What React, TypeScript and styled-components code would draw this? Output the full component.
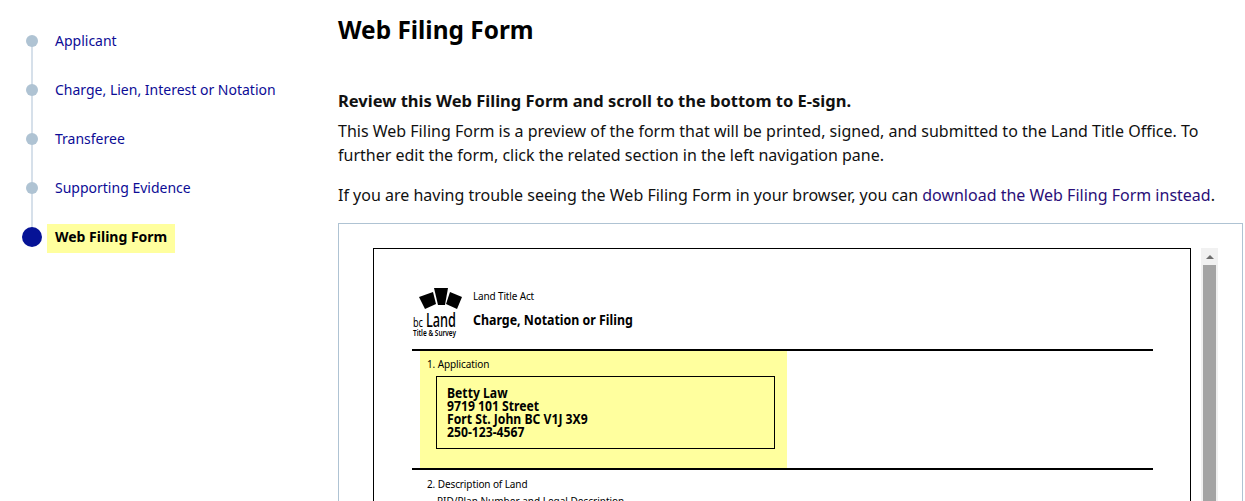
import styled, { createGlobalStyle } from 'styled-components';

const steps = ['Applicant', 'Charge, Lien, Interest or Notation', 'Transferee', 'Supporting Evidence'];

const GlobalStyle = createGlobalStyle`
  html, body {
    margin: 0;
    padding: 0;
    background: #fff;
    overflow: hidden;
  }
  body {
    font-family: "Noto Sans", "Open Sans", sans-serif;
    color: #111;
  }
`;

function Logo() {
	return (
		<LogoBox>
			<svg width="50" height="52" viewBox="0 0 50 52">
				<path d="M7 10 L21 5 L24 17 L13 22 Z" fill="#000" />
				<path d="M22 1 L36 1 L33 18 L26 18 Z" fill="#000" />
				<path d="M38 5 L50 10 L45 22 L34 17 Z" fill="#000" />
				<text x="1" y="40" fontFamily="Noto Sans" fontSize="13" fill="#000" textLength="10" lengthAdjust="spacingAndGlyphs">bc</text>
				<text x="14" y="40" fontFamily="Noto Sans" fontSize="20" fontWeight="500" fill="#000" textLength="30" lengthAdjust="spacingAndGlyphs">Land</text>
				<text x="1" y="48.500" fontFamily="Noto Sans" fontSize="8" fontWeight="600" fill="#000" textLength="43" lengthAdjust="spacingAndGlyphs">Title &amp; Survey</text>
			</svg>
		</LogoBox>
	);
}

function App() {
	return (
		<AppContainer>
			<GlobalStyle />

			<Sidebar>
				{steps.map(step => (
					<Step key={step}>
						<Dot />
						<StepLink href="#">{step}</StepLink>
					</Step>
				))}
				<Step>
					<Dot $active />
					<ActiveLabel>Web Filing Form</ActiveLabel>
				</Step>
			</Sidebar>

			<Main>
				<Title>Web Filing Form</Title>
				<Lead>Review this Web Filing Form and scroll to the bottom to E-sign.</Lead>
				<Para>
					This Web Filing Form is a preview of the form that will be printed, signed, and submitted to the Land Title
					Office. To further edit the form, click the related section in the left navigation pane.
				</Para>
				<Para>
					If you are having trouble seeing the Web Filing Form in your browser, you can{' '}
					<DownloadLink href="#">download the Web Filing Form instead</DownloadLink>.
				</Para>

				<Frame>
					<FormPage>
						<FormHeader>
							<Logo />
							<FormTitles>
								<ActName>Land Title Act</ActName>
								<FormName>Charge, Notation or Filing</FormName>
							</FormTitles>
						</FormHeader>

						<Section>
							<Highlight>
								<SectionLabel>1. Application</SectionLabel>
								<AddressBox>
									<AddressLine>Betty Law</AddressLine>
									<AddressLine>9719 101 Street</AddressLine>
									<AddressLine>Fort St. John BC V1J 3X9</AddressLine>
									<AddressLine>250-123-4567</AddressLine>
								</AddressBox>
							</Highlight>
						</Section>

						<Section>
							<PlainBlock>
								<SectionLabel>2. Description of Land</SectionLabel>
								<SubLabel>PID/Plan Number and Legal Description</SubLabel>
							</PlainBlock>
						</Section>
					</FormPage>

					<Scrollbar>
						<ScrollArrow />
						<ScrollThumb />
					</Scrollbar>
				</Frame>
			</Main>
		</AppContainer>
	);
}

export default App;

const AppContainer = styled.div`
	display: flex;
	height: 501px;
	width: 1245px;
	overflow: hidden;
`;

const Sidebar = styled.nav`
	width: 338px;
	flex: none;
	padding-top: 16px;
	box-sizing: border-box;
`;

const Step = styled.div`
	position: relative;
	display: flex;
	align-items: center;
	height: 49px;
	padding-left: 47px;

	&:not(:last-child)::before {
		content: '';
		position: absolute;
		left: 31px;
		top: 24px;
		height: 49px;
		width: 2px;
		background: #d6e0ea;
	}
`;

const Dot = styled.span<{ $active?: boolean }>`
	position: absolute;
	z-index: 1;
	top: 50%;
	left: ${props => (props.$active ? '22px' : '26px')};
	width: ${props => (props.$active ? '20px' : '12px')};
	height: ${props => (props.$active ? '20px' : '12px')};
	transform: translateY(-50%);
	border-radius: 50%;
	background: ${props => (props.$active ? '#061396' : '#afc3d3')};
`;

const StepLink = styled.a`
	padding-left: 8px;
	font-size: 14px;
	color: #0c0c96;
	text-decoration: none;
`;

const ActiveLabel = styled.span`
	margin-top: 4px;
	padding: 0 8px;
	height: 29px;
	line-height: 26px;
	background: #ffff9e;
	font-size: 14px;
	font-weight: 700;
	color: #000;
`;

const Main = styled.main`
	flex: 1;
	min-width: 0;
	padding-right: 2px;
`;

const Title = styled.h1`
	margin: 12px 0 0;
	font-size: 24.4px;
	line-height: 36px;
	font-weight: 700;
	color: #000;
`;

const Lead = styled.p`
	margin: 40px 0 0;
	font-size: 16.5px;
	line-height: 26px;
	font-weight: 700;
	color: #111;
`;

const Para = styled.p`
	margin: 5px 0 16px;
	font-size: 16px;
	line-height: 24px;
	color: #111;

	& + & {
		margin-top: 0;
	}
`;

const DownloadLink = styled.a`
	color: #2a0f78;
	text-decoration: none;
`;

const Frame = styled.div`
	display: flex;
	align-items: flex-start;
	gap: 10px;
	padding: 24px 24px 0 34px;
	border: 1px solid #afc3d3;
	height: 400px;
`;

const FormPage = styled.div`
	width: 818px;
	flex: none;
	box-sizing: border-box;
	height: 400px;
	padding: 38px 37px 0 38px;
	border: 1px solid #000;
`;

const FormHeader = styled.div`
	display: flex;
	gap: 11px;
	height: 62px;
`;

const LogoBox = styled.div`
	width: 50px;
	height: 52px;
	flex: none;
`;

const FormTitles = styled.div`
	display: flex;
	flex-direction: column;
`;

const ActName = styled.span`
	margin-top: 2px;
	font-size: 10px;
	line-height: 14px;
	letter-spacing: -0.15px;
	color: #000;
`;

const FormName = styled.span`
	margin-top: 8px;
	font-size: 14px;
	line-height: 18px;
	font-weight: 700;
	white-space: nowrap;
	transform: scaleX(0.885);
	transform-origin: left center;
	color: #000;
`;

const Section = styled.section`
	border-top: 2px solid #000;
`;

const Highlight = styled.div`
	width: 367px;
	height: 117px;
	margin-left: 8px;
	padding: 6px 12px 0 7px;
	box-sizing: border-box;
	background: #ffff9e;
`;

const PlainBlock = styled.div`
	padding: 7px 0 0 15px;
`;

const SectionLabel = styled.div`
	font-size: 10px;
	line-height: 14px;
	letter-spacing: -0.1px;
	color: #000;
`;

const SubLabel = styled.div`
	margin: 3px 0 0 10px;
	font-size: 10px;
	line-height: 14px;
	white-space: pre;
	color: #000;
`;

const AddressBox = styled.div`
	height: 73px;
	box-sizing: border-box;
	margin: 5px 0 0 9px;
	padding: 9px 10px 0;
	border: 1px solid #000;
`;

const AddressLine = styled.div`
	font-size: 14px;
	line-height: 13px;
	font-weight: 700;
	white-space: nowrap;
	transform: scaleX(0.87);
	transform-origin: left center;
	color: #000;
`;

const Scrollbar = styled.div`
	display: flex;
	flex-direction: column;
	align-items: center;
	width: 17px;
	height: 400px;
	flex: none;
	background: #f1f1f1;
`;

const ScrollArrow = styled.div`
	margin-top: 7px;
	width: 0;
	height: 0;
	border-left: 4px solid transparent;
	border-right: 4px solid transparent;
	border-bottom: 4px solid #6e6e6e;
	margin-bottom: 6px;
`;

const ScrollThumb = styled.div`
	width: 13px;
	flex: 1;
	background: #a4a4a4;
`;
